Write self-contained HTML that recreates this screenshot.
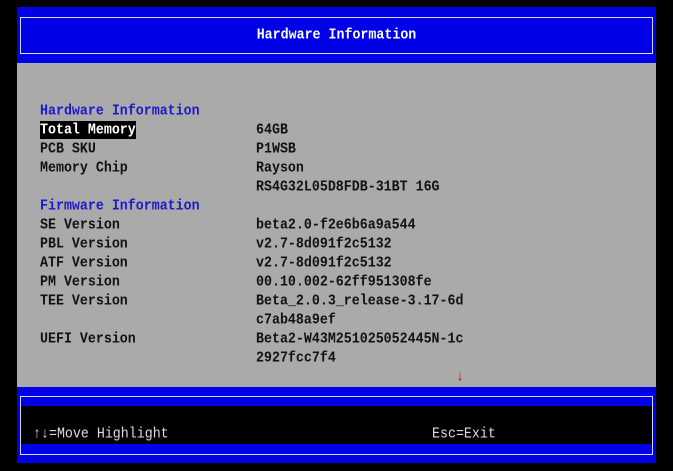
<!DOCTYPE html>
<html><head><meta charset="utf-8"><style>
html,body{margin:0;padding:0;background:#000;width:673px;height:471px;overflow:hidden}
.a{position:absolute}
.t{position:absolute;font-family:"Liberation Mono","DejaVu Sans Mono",monospace;font-size:13.3px;line-height:19px;height:19px;white-space:pre;color:#111;font-weight:bold;transform:scaleY(1.1);transform-origin:0 50%}
.b{color:#1a1acc}
</style></head><body>
<div class="a" style="left:17px;top:7px;width:639px;height:56px;background:#0000e6"></div>
<div class="a" style="left:20px;top:17px;width:631px;height:35px;border:1px solid #d8d8ff"></div>
<div class="t" style="left:0;width:673px;top:25px;text-align:center;color:#fff">Hardware Information</div>
<div class="a" style="left:17px;top:63px;width:639px;height:324px;background:#aaaaaa"></div>
<div class="a" style="left:17px;top:387px;width:639px;height:76px;background:#0000e6"></div>
<div class="a" style="left:20px;top:396px;width:631px;height:57px;border:1px solid #d8d8ff"></div>
<div class="a" style="left:21px;top:406px;width:631px;height:38px;background:#000"></div>
<div class="t" style="left:33px;top:424px;color:#ddd;font-weight:normal">↑↓=Move Highlight</div>
<div class="t" style="left:432px;top:424px;color:#ddd;font-weight:normal">Esc=Exit</div>
<div class="a" style="left:40px;top:121px;width:96px;height:18px;background:#000"></div>

<div class="t b" style="left:40px;top:101px">Hardware Information</div>
<div class="t" style="left:40px;top:120px;color:#fff">Total Memory</div>
<div class="t" style="left:40px;top:139px">PCB SKU</div>
<div class="t" style="left:40px;top:158px">Memory Chip</div>
<div class="t b" style="left:40px;top:196px">Firmware Information</div>
<div class="t" style="left:40px;top:215px">SE Version</div>
<div class="t" style="left:40px;top:234px">PBL Version</div>
<div class="t" style="left:40px;top:253px">ATF Version</div>
<div class="t" style="left:40px;top:272px">PM Version</div>
<div class="t" style="left:40px;top:291px">TEE Version</div>
<div class="t" style="left:40px;top:329px">UEFI Version</div>

<div class="t" style="left:256px;top:120px">64GB</div>
<div class="t" style="left:256px;top:139px">P1WSB</div>
<div class="t" style="left:256px;top:158px">Rayson</div>
<div class="t" style="left:256px;top:177px">RS4G32L05D8FDB-31BT 16G</div>
<div class="t" style="left:256px;top:215px">beta2.0-f2e6b6a9a544</div>
<div class="t" style="left:256px;top:234px">v2.7-8d091f2c5132</div>
<div class="t" style="left:256px;top:253px">v2.7-8d091f2c5132</div>
<div class="t" style="left:256px;top:272px">00.10.002-62ff951308fe</div>
<div class="t" style="left:256px;top:291px">Beta_2.0.3_release-3.17-6d</div>
<div class="t" style="left:256px;top:310px">c7ab48a9ef</div>
<div class="t" style="left:256px;top:329px">Beta2-W43M251025052445N-1c</div>
<div class="t" style="left:256px;top:348px">2927fcc7f4</div>
<div class="t" style="left:456px;top:367px;color:#e00000">↓</div>
</body></html>
